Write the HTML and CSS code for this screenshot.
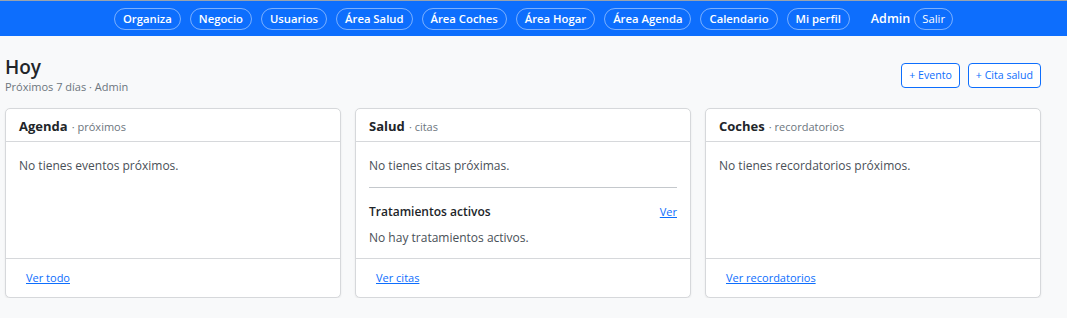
FILE: index.html
```html
<!DOCTYPE html>
<html lang="es">
<head>
  <meta charset="UTF-8" />
  <meta name="viewport" content="width=device-width, initial-scale=1.0"/>
  <title>Hoy</title>
  <link rel="stylesheet" href="styles.css">
</head>
<body>
  <nav class="topbar">
    <a class="pill" href="#">Organiza</a>
    <a class="pill" href="#">Negocio</a>
    <a class="pill" href="#">Usuarios</a>
    <a class="pill" href="#">Área Salud</a>
    <a class="pill" href="#">Área Coches</a>
    <a class="pill" href="#">Área Hogar</a>
    <a class="pill" href="#">Área Agenda</a>
    <a class="pill" href="#">Calendario</a>
    <a class="pill" href="#">Mi perfil</a>
    <span class="user">Admin</span>
    <a class="pill light" href="#">Salir</a>
  </nav>

  <main class="page">
    <div class="page-head">
      <div>
        <h1>Hoy</h1>
        <div class="sub">Próximos 7 días · Admin</div>
      </div>
      <div class="actions">
        <a class="btn" href="#">+ Evento</a>
        <a class="btn" href="#">+ Cita salud</a>
      </div>
    </div>

    <div class="cards">
      <section class="card">
        <div class="card-head"><strong>Agenda</strong> <span>· próximos</span></div>
        <div class="card-body">
          <p>No tienes eventos próximos.</p>
        </div>
        <div class="card-foot"><a href="#">Ver todo</a></div>
      </section>

      <section class="card">
        <div class="card-head"><strong>Salud</strong> <span>· citas</span></div>
        <div class="card-body">
          <p>No tienes citas próximas.</p>
          <hr>
          <div class="row">
            <h3>Tratamientos activos</h3>
            <a href="#">Ver</a>
          </div>
          <p>No hay tratamientos activos.</p>
        </div>
        <div class="card-foot"><a href="#">Ver citas</a></div>
      </section>

      <section class="card">
        <div class="card-head"><strong>Coches</strong> <span>· recordatorios</span></div>
        <div class="card-body">
          <p>No tienes recordatorios próximos.</p>
        </div>
        <div class="card-foot"><a href="#">Ver recordatorios</a></div>
      </section>
    </div>
  </main>
</body>
</html>
```

FILE: styles.css
```css
body {
  font-family: 'Open Sans', 'Noto Sans', sans-serif;
  background: #f8f9fa;
  color: #212529;
  margin: 0;
  padding: 0;
}

.topbar {
  background: #0d6efd;
  border-top: 1px solid #9aa3ad;
  height: 35px;
  display: flex;
  align-items: center;
  justify-content: center;
  gap: 9px;
}

.pill {
  color: #fff;
  font-size: 11.3px;
  font-weight: 600;
  text-decoration: none;
  border: 1px solid rgba(255,255,255,0.45);
  border-radius: 12px;
  padding: 2px 8px;
  line-height: 16px;
}

.pill.light {
  font-weight: 400;
  padding: 2px 7px;
  margin-left: -5px;
}

.user {
  color: #fff;
  font-size: 12.5px;
  font-weight: 600;
  margin-left: 12px;
}

.page {
  padding: 0 26px 0 5px;
}

.page-head {
  display: flex;
  justify-content: space-between;
  align-items: flex-start;
  padding-top: 20px;
}

h1 {
  font-size: 19px;
  font-weight: 600;
  margin: 0;
  line-height: 22px;
}

.sub {
  font-size: 11px;
  color: #6c757d;
  margin-top: 1px;
}

.actions {
  display: flex;
  gap: 8px;
  margin-top: 7px;
}

.btn {
  font-size: 10.6px;
  color: #0d6efd;
  text-decoration: none;
  border: 1px solid #0d6efd;
  border-radius: 4px;
  padding: 4px 7px 5px;
  line-height: 14px;
  background: #fff;
}

.cards {
  display: grid;
  grid-template-columns: repeat(3, 1fr);
  gap: 14px;
  margin-top: 14px;
}

.card {
  background: #fff;
  border: 1px solid #d6d8db;
  border-radius: 5px;
  box-shadow: 0 1px 2px rgba(0,0,0,0.08);
  display: flex;
  flex-direction: column;
  height: 188px;
}

.card-head {
  padding: 8px 13px;
  border-bottom: 1px solid #d6d8db;
  height: 16px;
  line-height: 16px;
}

.card-head strong {
  font-size: 13px;
}

.card-head span {
  font-size: 11px;
  color: #6c757d;
}

.card-body {
  flex: 1;
  padding: 15px 13px 0;
}

.card-body p {
  font-size: 12px;
  color: #495057;
  margin: 0;
  line-height: 18px;
}

hr {
  border: 0;
  border-top: 1px solid #c4c8cc;
  margin: 12px 0 15px;
}

.row {
  display: flex;
  justify-content: space-between;
  align-items: center;
  margin-bottom: 9px;
}

.row h3 {
  font-size: 12px;
  font-weight: 600;
  margin: 0;
}

.row a, .card-foot a {
  font-size: 11px;
  color: #0d6efd;
}

.card-foot {
  border-top: 1px solid #d6d8db;
  padding: 9px 20px 11px;
  line-height: 16px;
}
```
